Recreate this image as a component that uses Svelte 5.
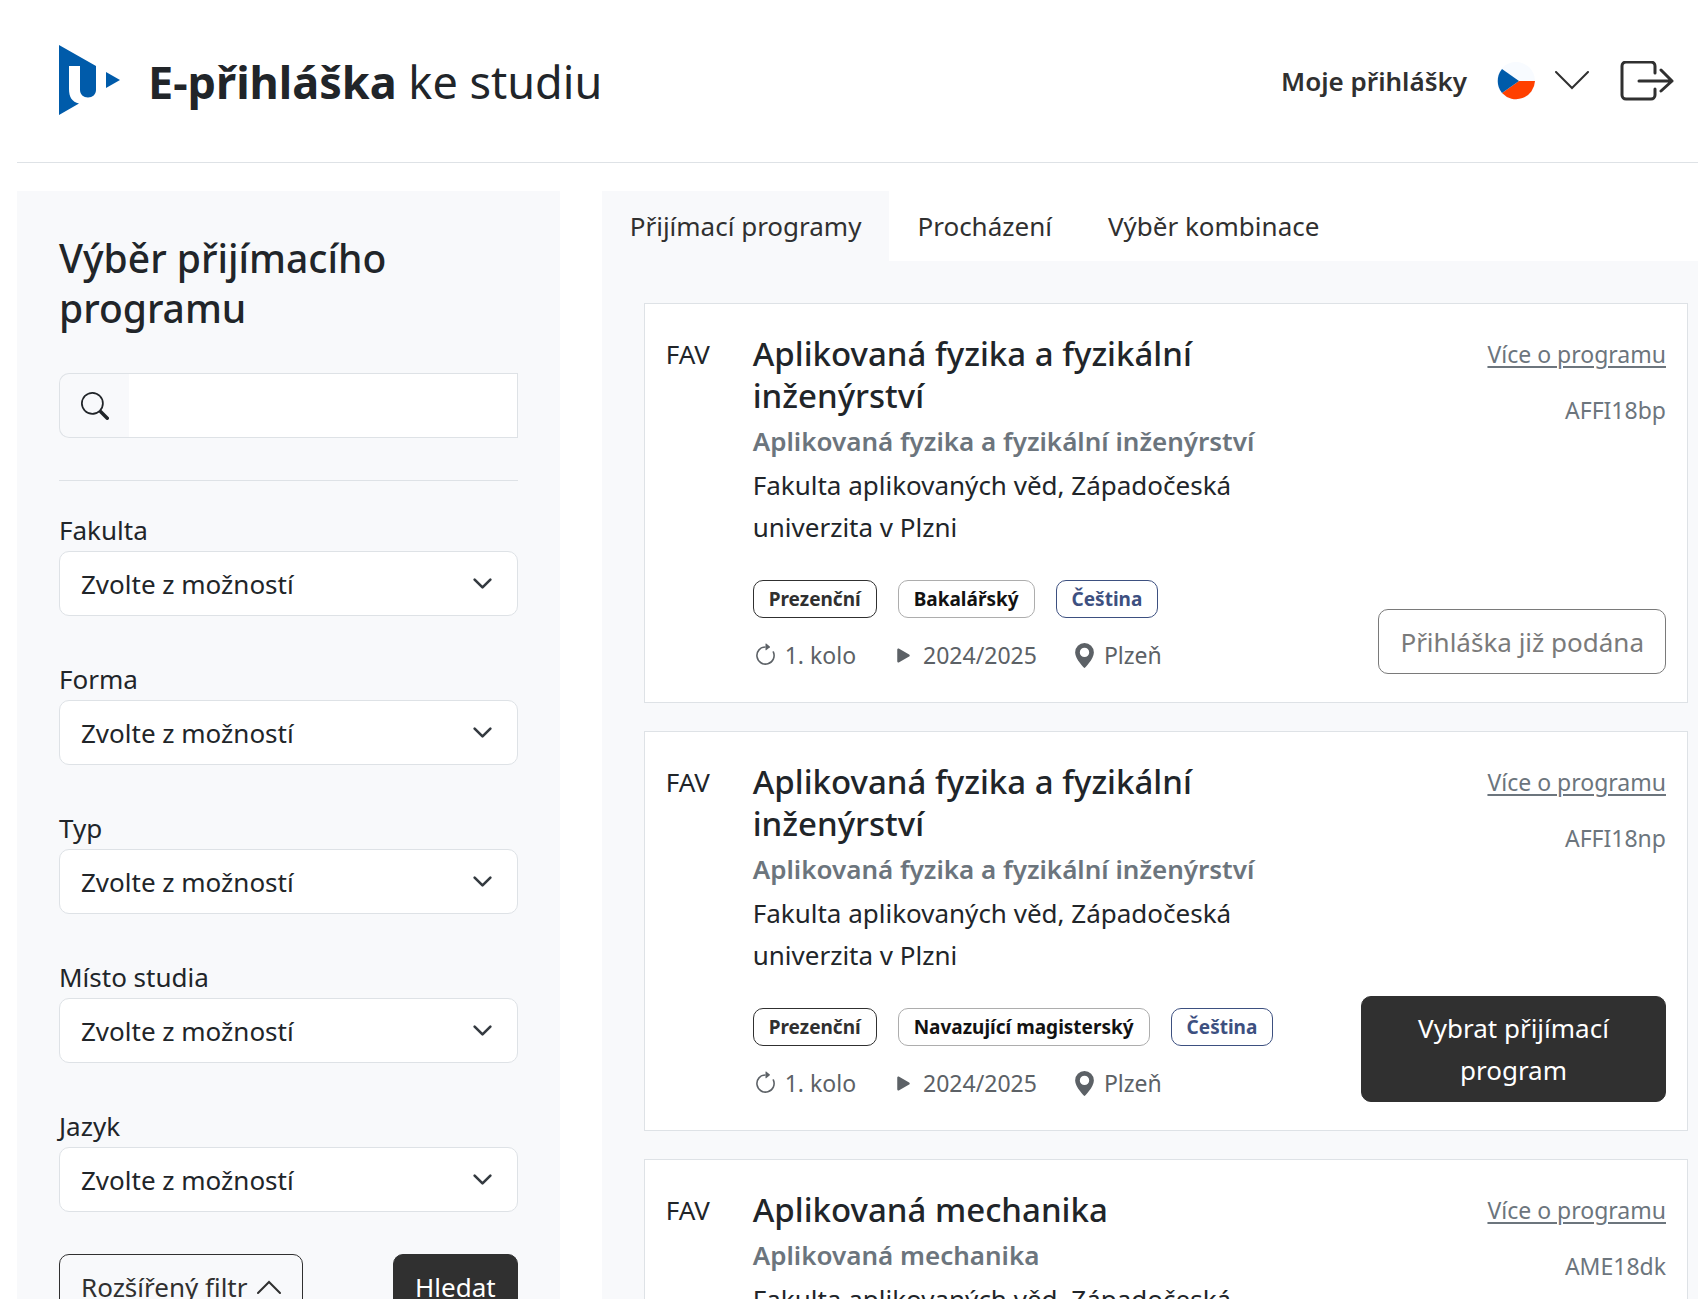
<script lang="ts">
	interface Badge {
		text: string;
		kind: 'form' | 'type' | 'lang';
	}

	interface Program {
		faculty: string;
		title: string;
		school: string;
		code: string;
		badges: Badge[];
		submitted: boolean;
	}

	const SCHOOL = 'Fakulta aplikovaných věd, Západočeská univerzita v Plzni';

	const FILTERS = ['Fakulta', 'Forma', 'Typ', 'Místo studia', 'Jazyk'];

	const TABS = ['Přijímací programy', 'Procházení', 'Výběr kombinace'];

	const PROGRAMS: Program[] = [
		{
			faculty: 'FAV',
			title: 'Aplikovaná fyzika a fyzikální inženýrství',
			school: SCHOOL,
			code: 'AFFI18bp',
			badges: [
				{ text: 'Prezenční', kind: 'form' },
				{ text: 'Bakalářský', kind: 'type' },
				{ text: 'Čeština', kind: 'lang' }
			],
			submitted: true
		},
		{
			faculty: 'FAV',
			title: 'Aplikovaná fyzika a fyzikální inženýrství',
			school: SCHOOL,
			code: 'AFFI18np',
			badges: [
				{ text: 'Prezenční', kind: 'form' },
				{ text: 'Navazující magisterský', kind: 'type' },
				{ text: 'Čeština', kind: 'lang' }
			],
			submitted: false
		},
		{
			faculty: 'FAV',
			title: 'Aplikovaná mechanika',
			school: SCHOOL,
			code: 'AME18dk',
			badges: [
				{ text: 'Kombinovaná', kind: 'form' },
				{ text: 'Doktorský', kind: 'type' },
				{ text: 'Čeština', kind: 'lang' }
			],
			submitted: false
		}
	];

	let activeTab = $state(0);
	let query = $state('');
</script>

<div class="page">
	<header class="header">
		<a class="brand" href="#home">
			<svg class="logo" viewBox="0 0 61 70" aria-hidden="true">
				<path
					fill="#005baa"
					d="M0 0 37 21V45C37 49.500 33.500 52.500 29 52.500S21 49.500 21 45V21H10V44C10 52 13 57 20 58.500L0 70Z"
				/>
				<path fill="#005baa" d="M47 27 61 35 47 43Z" />
			</svg>
			<span class="brand-text"><b>E-přihláška</b> ke studiu</span>
		</a>
		<nav class="menu">
			<a class="menu-link" href="#applications">Moje přihlášky</a>
			<button class="language" aria-label="Jazyk stránky">
				<svg class="flag" viewBox="0 0 38 38" aria-hidden="true">
					<circle cx="19" cy="19" r="19" fill="#f8fbff" />
					<path fill="#ff4000" d="M22 19H38A19 19 0 0 1 5 31Z" />
					<path fill="#005baa" d="M22 19 5 7A19 19 0 0 0 5 31Z" />
				</svg>
				<svg class="chevron" viewBox="0 0 34 20" aria-hidden="true">
					<path d="m1 1 16 16L33 1" fill="none" stroke="#303030" stroke-width="2" stroke-linecap="round" />
				</svg>
			</button>
			<button class="logout" aria-label="Odhlásit">
				<svg viewBox="0 0 54 40" aria-hidden="true">
					<path
						d="M35 12V5a4 4 0 0 0-4-4H6a4 4 0 0 0-4 4v29a4 4 0 0 0 4 4h25a4 4 0 0 0 4-4v-6M19 20h33M41 9l11 11-11 10"
						fill="none"
						stroke="#303030"
						stroke-width="3"
						stroke-linecap="round"
						stroke-linejoin="round"
					/>
				</svg>
			</button>
		</nav>
	</header>

	<main class="columns">
		<aside class="sidebar">
			<h2>Výběr přijímacího programu</h2>

			<div class="search">
				<label class="search-icon" for="search" aria-label="Hledat program">
					<svg viewBox="0 0 16 16" fill="currentColor" aria-hidden="true">
						<path
							d="M11.742 10.344a6.500 6.500 0 1 0-1.397 1.398h-.001q.044.06.098.115l3.850 3.850a1 1 0 0 0 1.415-1.414l-3.850-3.850a1 1 0 0 0-.115-.1zM12 6.500a5.500 5.500 0 1 1-11 0 5.500 5.500 0 0 1 11 0"
						/>
					</svg>
				</label>
				<input id="search" type="text" bind:value={query} />
			</div>

			<hr />

			<form class="filters">
				{#each FILTERS as filter, i}
					<div class="filter">
						<label for="filter-{i}">{filter}</label>
						<div class="select">
							<select id="filter-{i}">
								<option>Zvolte z možností</option>
							</select>
							<svg viewBox="0 0 16 16" aria-hidden="true">
								<path
									d="m2 5 6 6 6-6"
									fill="none"
									stroke="#343a40"
									stroke-width="2"
									stroke-linecap="round"
									stroke-linejoin="round"
								/>
							</svg>
						</div>
					</div>
				{/each}

				<div class="actions">
					<button type="button" class="btn outline">
						Rozšířený filtr
						<svg class="up" viewBox="0 0 24 16" aria-hidden="true">
							<path d="M1 14 12 3l11 11" fill="none" stroke="currentColor" stroke-width="2" stroke-linecap="round" />
						</svg>
					</button>
					<button type="button" class="btn dark">Hledat</button>
				</div>
			</form>
		</aside>

		<section class="content">
			<div class="tabs" role="tablist">
				{#each TABS as tab, i}
					<button class="tab" class:active={activeTab === i} role="tab" aria-selected={activeTab === i} onclick={() => (activeTab = i)}>
						{tab}
					</button>
				{/each}
			</div>

			<div class="panel">
				{#each PROGRAMS as program}
					<article class="card">
						<div class="faculty">{program.faculty}</div>

						<div class="info">
							<h3>{program.title}</h3>
							<h4>{program.title}</h4>
							<p>{program.school}</p>
							<div class="badges">
								{#each program.badges as badge}
									<span class="badge {badge.kind}">{badge.text}</span>
								{/each}
							</div>
							<div class="meta">
								<span class="meta-item">
									<svg viewBox="0 0 16 16" fill="currentColor" aria-hidden="true">
										<path d="M8 3a5 5 0 1 0 4.546 2.914.5.5 0 0 1 .908-.417A6 6 0 1 1 8 2z" />
										<path
											d="M8 4.466V.534a.25.25 0 0 1 .41-.192l2.360 1.966c.12.1.12.284 0 .384L8.410 4.658A.25.25 0 0 1 8 4.466"
										/>
									</svg>
									1. kolo
								</span>
								<span class="meta-item">
									<svg viewBox="0 0 16 16" fill="currentColor" aria-hidden="true">
										<path
											d="m11.596 8.697-6.363 3.692c-.54.313-1.233-.066-1.233-.697V4.308c0-.63.692-1.010 1.233-.696l6.363 3.692a.802.802 0 0 1 0 1.393"
										/>
									</svg>
									2024/2025
								</span>
								<span class="meta-item">
									<svg viewBox="0 0 16 16" fill="currentColor" aria-hidden="true">
										<path d="M8 16s6-5.686 6-10A6 6 0 0 0 2 6c0 4.314 6 10 6 10m0-7a3 3 0 1 1 0-6 3 3 0 0 1 0 6" />
									</svg>
									Plzeň
								</span>
							</div>
						</div>

						<div class="side">
							<a class="more" href="#program-{program.code}">Více o programu</a>
							<span class="code">{program.code}</span>
							{#if program.submitted}
								<button class="btn outline submitted" disabled>Přihláška již podána</button>
							{:else}
								<button class="btn dark">Vybrat přijímací program</button>
							{/if}
						</div>
					</article>
				{/each}
			</div>
		</section>
	</main>
</div>

<style>
	:global(body) {
		background: #fff;
	}

	.page {
		min-height: 100vh;
		padding-left: 17px;
		box-sizing: border-box;
		color: #212529;
		font-family: 'Segoe UI', 'Noto Sans', 'Open Sans', sans-serif;
		font-size: 26px;
		line-height: 42px;
	}

	.page :global(*) {
		box-sizing: border-box;
	}

	button,
	input,
	select {
		color: inherit;
		font: inherit;
	}

	button {
		padding: 0;
		border: 0;
		background: none;
		cursor: pointer;
	}

	svg {
		display: block;
		flex: none;
	}

	.header {
		display: flex;
		justify-content: space-between;
		align-items: center;
		height: 163px;
		padding: 0 24px 2px 42px;
		border-bottom: 1px solid #dee2e6;
	}

	.brand {
		display: flex;
		gap: 28px;
		align-items: center;
		color: inherit;
		text-decoration: none;
	}

	.logo {
		width: 61px;
		height: 70px;
	}

	.brand-text {
		padding-top: 4px;
		font-size: 45px;
		line-height: 56px;
	}

	.menu {
		display: flex;
		align-items: center;
		padding-top: 2px;
		color: #303030;
	}

	.menu-link {
		margin-right: 30px;
		color: inherit;
		font-weight: 600;
		text-decoration: none;
	}

	.language {
		display: flex;
		gap: 20px;
		align-items: center;
		margin-right: 31px;
	}

	.flag {
		width: 38px;
		height: 38px;
	}

	.chevron {
		width: 34px;
		height: 20px;
	}

	.logout svg {
		width: 54px;
		height: 40px;
	}

	.columns {
		display: grid;
		grid-template-columns: minmax(0, 1fr) minmax(0, 2.02fr);
		gap: 42px;
		padding-top: 28px;
	}

	.sidebar {
		padding: 42px;
		background: #f8f9fb;
	}

	h2 {
		margin: 0 0 40px;
		font-size: 39px;
		font-weight: 500;
		line-height: 50px;
	}

	.search {
		display: flex;
		height: 65px;
	}

	.search-icon {
		display: flex;
		flex: none;
		justify-content: center;
		align-items: center;
		width: 70px;
		border: 1px solid #dee2e6;
		border-right: 0;
		border-radius: 10px 0 0 10px;
	}

	.search-icon svg {
		width: 28px;
		height: 28px;
	}

	.search input {
		flex: 1;
		min-width: 0;
		padding: 10px 21px;
		border: 1px solid #dee2e6;
		border-left: 0;
		background: #fff;
	}

	hr {
		margin: 42px 0 28px;
		border: 0;
		border-top: 1px solid #dee2e6;
	}

	.filters {
		display: flex;
		flex-direction: column;
		gap: 42px;
	}

	.filter label {
		display: block;
	}

	.select {
		display: grid;
		align-items: center;
	}

	.select select {
		grid-area: 1 / 1;
		appearance: none;
		width: 100%;
		height: 65px;
		padding: 0 62px 0 21px;
		border: 1px solid #dee2e6;
		border-radius: 10px;
		background: #fff;
	}

	.select svg {
		grid-area: 1 / 1;
		justify-self: end;
		width: 21px;
		height: 21px;
		margin-right: 25px;
		pointer-events: none;
	}

	.actions {
		display: flex;
		justify-content: space-between;
	}

	.btn {
		min-height: 65px;
		padding: 10px 21px;
		border: 1px solid #303030;
		border-radius: 10px;
	}

	.outline {
		display: flex;
		gap: 10px;
		align-items: center;
		color: #303030;
	}

	.dark {
		background: #303030;
		color: #fff;
	}

	.up {
		width: 24px;
		height: 16px;
	}

	.tabs {
		display: flex;
		height: 70px;
	}

	.tab {
		padding: 0 28px;
		color: #303030;
	}

	.tab.active {
		background: #f8f9fb;
	}

	.panel {
		display: flex;
		flex-direction: column;
		gap: 28px;
		padding: 42px 10px 42px 42px;
		background: #f8f9fb;
	}

	.card {
		display: grid;
		grid-template-columns: 66px minmax(0, 1fr) 305px;
		gap: 21px;
		padding: 29px 21px 28px;
		border: 1px solid #dee2e6;
		background: #fff;
	}

	.info {
		padding-right: 21px;
	}

	h3,
	h4,
	p {
		margin: 0;
	}

	h3 {
		font-size: 33px;
		font-weight: 500;
		line-height: 42px;
	}

	h4 {
		margin: 4px 0 2px;
		color: #6c757d;
		font-size: 26px;
		font-weight: 600;
		line-height: 41px;
	}

	.badges {
		display: flex;
		gap: 21px;
		margin-top: 32px;
	}

	.badge {
		height: 38px;
		padding: 0 15px;
		border: 1px solid;
		border-radius: 10px;
		font-size: 19px;
		font-weight: 700;
		line-height: 36px;
		white-space: nowrap;
	}

	.badge.form {
		color: #303030;
	}

	.badge.type {
		border-color: #adadad;
		color: #121212;
	}

	.badge.lang {
		color: #3d5080;
	}

	.meta {
		display: flex;
		gap: 35px;
		margin-top: 19px;
		color: #5c6166;
		font-size: 23px;
		line-height: 37px;
	}

	.meta-item {
		display: flex;
		gap: 7px;
		align-items: center;
	}

	.meta-item svg {
		width: 25px;
		height: 25px;
	}

	.side {
		display: flex;
		flex-direction: column;
		align-items: flex-end;
		color: #6c757d;
		font-size: 23px;
		line-height: 42px;
	}

	.more {
		margin-bottom: 14px;
		color: inherit;
		text-decoration-thickness: 2px;
		text-underline-offset: 3px;
	}

	.side .btn {
		margin-top: auto;
		font-size: 26px;
	}

	.submitted {
		border-color: #7a7a7a;
		color: #7a7a7a;
		white-space: nowrap;
	}
</style>
